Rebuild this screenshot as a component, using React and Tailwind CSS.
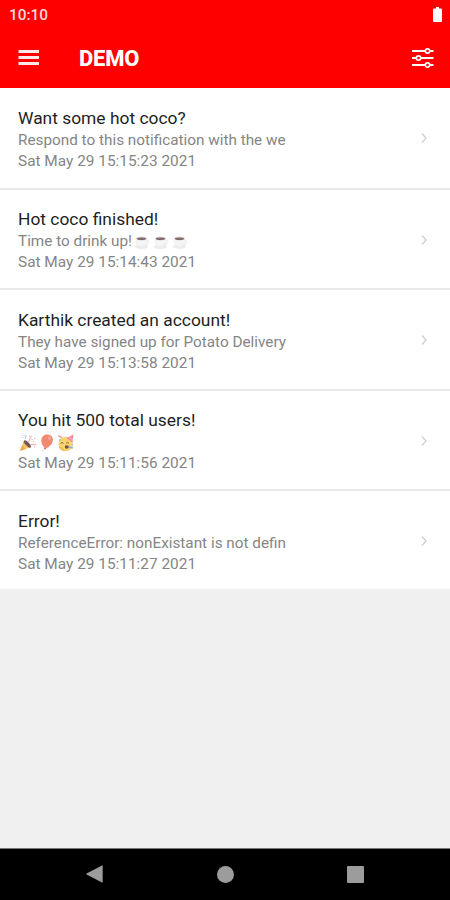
import React from "react";

function Cup() {
  return (
    <svg viewBox="0 0 19 17" className="h-[17px] w-[19px] shrink-0">
      <ellipse cx="7.5" cy="13.8" rx="6.8" ry="2.2" fill="#ececec" />
      <path d="M12 7.5h1.6c2.2 0 1.8 4.2-2.6 4.3" fill="none" stroke="#e6e6e6" strokeWidth="1" />
      <path d="M1.8 5.5h11.4c0 5-1.8 8.3-5.700 8.300S1.800 10.500 1.800 5.500Z" fill="#f5f5f5" stroke="#e4e4e4" strokeWidth=".5" />
      <ellipse cx="7.500" cy="5.600" rx="5.700" ry="2.100" fill="#e2dedd" />
      <ellipse cx="7.500" cy="5.800" rx="4.600" ry="1.300" fill="#806c6a" />
    </svg>
  );
}

function Popper() {
  return (
    <svg viewBox="0 0 18 18" className="h-[18px] w-[18px]">
      <path d="M1 17 5 6.500c3 .5 6 3.500 7 6.500Z" fill="#f7c566" />
      <path d="M1 17 3 11.500l3.500 3.600ZM4 9l6 5 2-1-7-6.500Z" fill="#eda84c" />
      <ellipse cx="8.500" cy="10" rx="1.700" ry="4.700" transform="rotate(-45 8.500 10)" fill="#6b5960" />
      <path d="M9 8c3-2 1-5 4-6M11 11c2-2 4 1 6-1" fill="none" stroke="#f6b8b5" strokeWidth="1.300" />
      <path d="M6 5c2-1 0-3 1-4" fill="none" stroke="#b8d2f0" strokeWidth="1.200" />
      <path d="M3 3.500h1.200M10 2h1.200M15 4.500h1.300M14 7.500h1.200M15 13h1.200" stroke="#f8bda0" strokeWidth="1.200" />
      <path d="M12.500 5.500h1.200M4.500 1.500h1" stroke="#a2c1ec" strokeWidth="1.200" />
    </svg>
  );
}

function Balloon() {
  return (
    <svg viewBox="0 0 14 18" className="h-[18px] w-[14px]">
      <path d="M5 14c-1 1-1 2-3 3.500" fill="none" stroke="#d6c9c6" strokeWidth=".8" />
      <path d="M7.500.5c4 0 6 3 5.300 6.500C12 11 8 14 5.500 14.200 3 13 1 9 1.300 6 1.700 2.500 4 .5 7.500.5Z" fill="#f28a72" />
      <path d="m4.300 13.500 2.200.4-.7 1.300-1.800-.3Z" fill="#e07362" />
      <ellipse cx="9.500" cy="4" rx="1.500" ry="2" fill="#f7a692" />
    </svg>
  );
}

function PartyFace() {
  return (
    <svg viewBox="0 0 18 18" className="h-[18px] w-[18px]">
      <circle cx="8.700" cy="10" r="7.300" fill="#f9d36f" />
      <path d="M2 12c0 3 3 5 6.500 5.200L4 13Z" fill="#f4b95d" />
      <path d="m9.500 4 7-3.500-1 8Z" fill="#f18aa2" />
      <path d="m12 3 4 3" stroke="#f8bccb" strokeWidth="1" />
      <path d="M1 2c2-.5 2 1.500 4 1.500" fill="none" stroke="#ef9da0" strokeWidth="1.400" />
      <path d="M3.500 9.500q1.500-2 3 0M9 9.300q1.500-2 3 0" fill="none" stroke="#86694a" strokeWidth="1" />
      <ellipse cx="9.800" cy="13" rx="2" ry="1.700" fill="#74503c" />
      <path d="m12 13 4 1" stroke="#8fb3db" strokeWidth="1.500" />
      <circle cx="3" cy="6" r="1" fill="#9fcdad" />
      <circle cx="15.500" cy="11" r=".8" fill="#9fc1e2" />
    </svg>
  );
}

const items = [
  { title: "Want some hot coco?", body: "Respond to this notification with the we", date: "Sat May 29 15:15:23 2021" },
  {
    title: "Hot coco finished!",
    body: (
      <>
        Time to drink up!
        <span className="ml-[2px] flex"><Cup /><Cup /><Cup /></span>
      </>
    ),
    date: "Sat May 29 15:14:43 2021",
  },
  { title: "Karthik created an account!", body: "They have signed up for Potato Delivery", date: "Sat May 29 15:13:58 2021" },
  {
    title: "You hit 500 total users!",
    body: <span className="ml-px flex gap-[3px]"><Popper /><Balloon /><PartyFace /></span>,
    date: "Sat May 29 15:11:56 2021",
  },
  { title: "Error!", body: "ReferenceError: nonExistant is not defin", date: "Sat May 29 15:11:27 2021" },
];

function Row({ item }) {
  return (
    <li className="flex h-[100.6px] items-start justify-between border-b-2 border-[#e9e9e9] bg-white pl-[18px] pr-[21px] pt-[18.5px] first:h-[101.6px] last:h-[97.6px] last:border-b-0">
      <div className="whitespace-nowrap">
        <h2 className="h-[23px] text-[17.4px] leading-[23px] text-[#1f1f1f]">{item.title}</h2>
        <p className="flex h-[21px] items-center text-[15.300px] leading-[21px] text-[#858585]">{item.body}</p>
        <p className="h-[21px] text-[15.400px] leading-[21px] text-[#858585]">{item.date}</p>
      </div>
      <svg viewBox="0 0 10 12" className="mt-[25.500px] h-3 w-[10px]" fill="none" stroke="#cfcfcf" strokeWidth="1.300">
        <path d="m3 1.500 4 4.500-4 4.500" />
      </svg>
    </li>
  );
}

export default function App() {
  return (
    <div className="flex h-[900px] w-[450px] flex-col overflow-hidden bg-[#f0f0f0] font-[Roboto,sans-serif]">
      <header className="h-[88px] shrink-0 bg-[#ff0000] text-white">
        <div className="flex h-7 items-center justify-between pl-[9px] pr-[8px]">
          <span className="pt-px text-[15.400px] font-medium leading-7 text-[#ffd8d8]">10:10</span>
          <svg viewBox="0 0 9 15" className="h-[15px] w-[9px]" fill="white">
            <path d="M3 0h3v1.500h2q1 0 1 1V14q0 1-1 1H1q-1 0-1-1V2.500q0-1 1-1h2Z" />
          </svg>
        </div>
        <div className="flex h-[60px] items-center pl-[18px] pr-4">
          <svg viewBox="0 0 21 15" className="mb-[2px] h-[15px] w-[21px]" stroke="#ffe9e9" strokeWidth="3">
            <path d="M.5 1.500h20.500M.5 7.500h20.500M.5 13.500h20.500" />
          </svg>
          <h1 className="ml-10 pt-[2px] text-[22px] font-extrabold leading-7 tracking-[-0.2px]">DEMO</h1>
          <svg viewBox="0 0 22 20" className="mb-px ml-auto h-5 w-[22px]" fill="none" stroke="white" strokeWidth="2">
            <path d="M0 3h13M18 3h3.500M0 10h4M9 10h12.500M0 17h13M18 17h3.500" />
            <circle cx="15.500" cy="3" r="2.200" strokeWidth="1.700" />
            <circle cx="6.500" cy="10" r="2.200" strokeWidth="1.700" />
            <circle cx="15.500" cy="17" r="2.200" strokeWidth="1.700" />
          </svg>
        </div>
      </header>
      <ul>
        {items.map((item) => (
          <Row key={item.title} item={item} />
        ))}
      </ul>
      <nav className="mt-auto flex h-[52px] shrink-0 items-center justify-between border-t border-[#777777] bg-black px-[86px] pb-px">
        <svg viewBox="0 0 17 18" className="h-[18px] w-[17px]" fill="#9c9c9c">
          <path d="M16 .5q.7-.3.700.5v16q0 .8-.7.500L.5 9.500q-.5-.5 0-1Z" />
        </svg>
        <span className="size-[17px] rounded-full bg-[#9c9c9c]" />
        <span className="size-[17px] rounded-[1px] bg-[#9c9c9c]" />
      </nav>
    </div>
  );
}
